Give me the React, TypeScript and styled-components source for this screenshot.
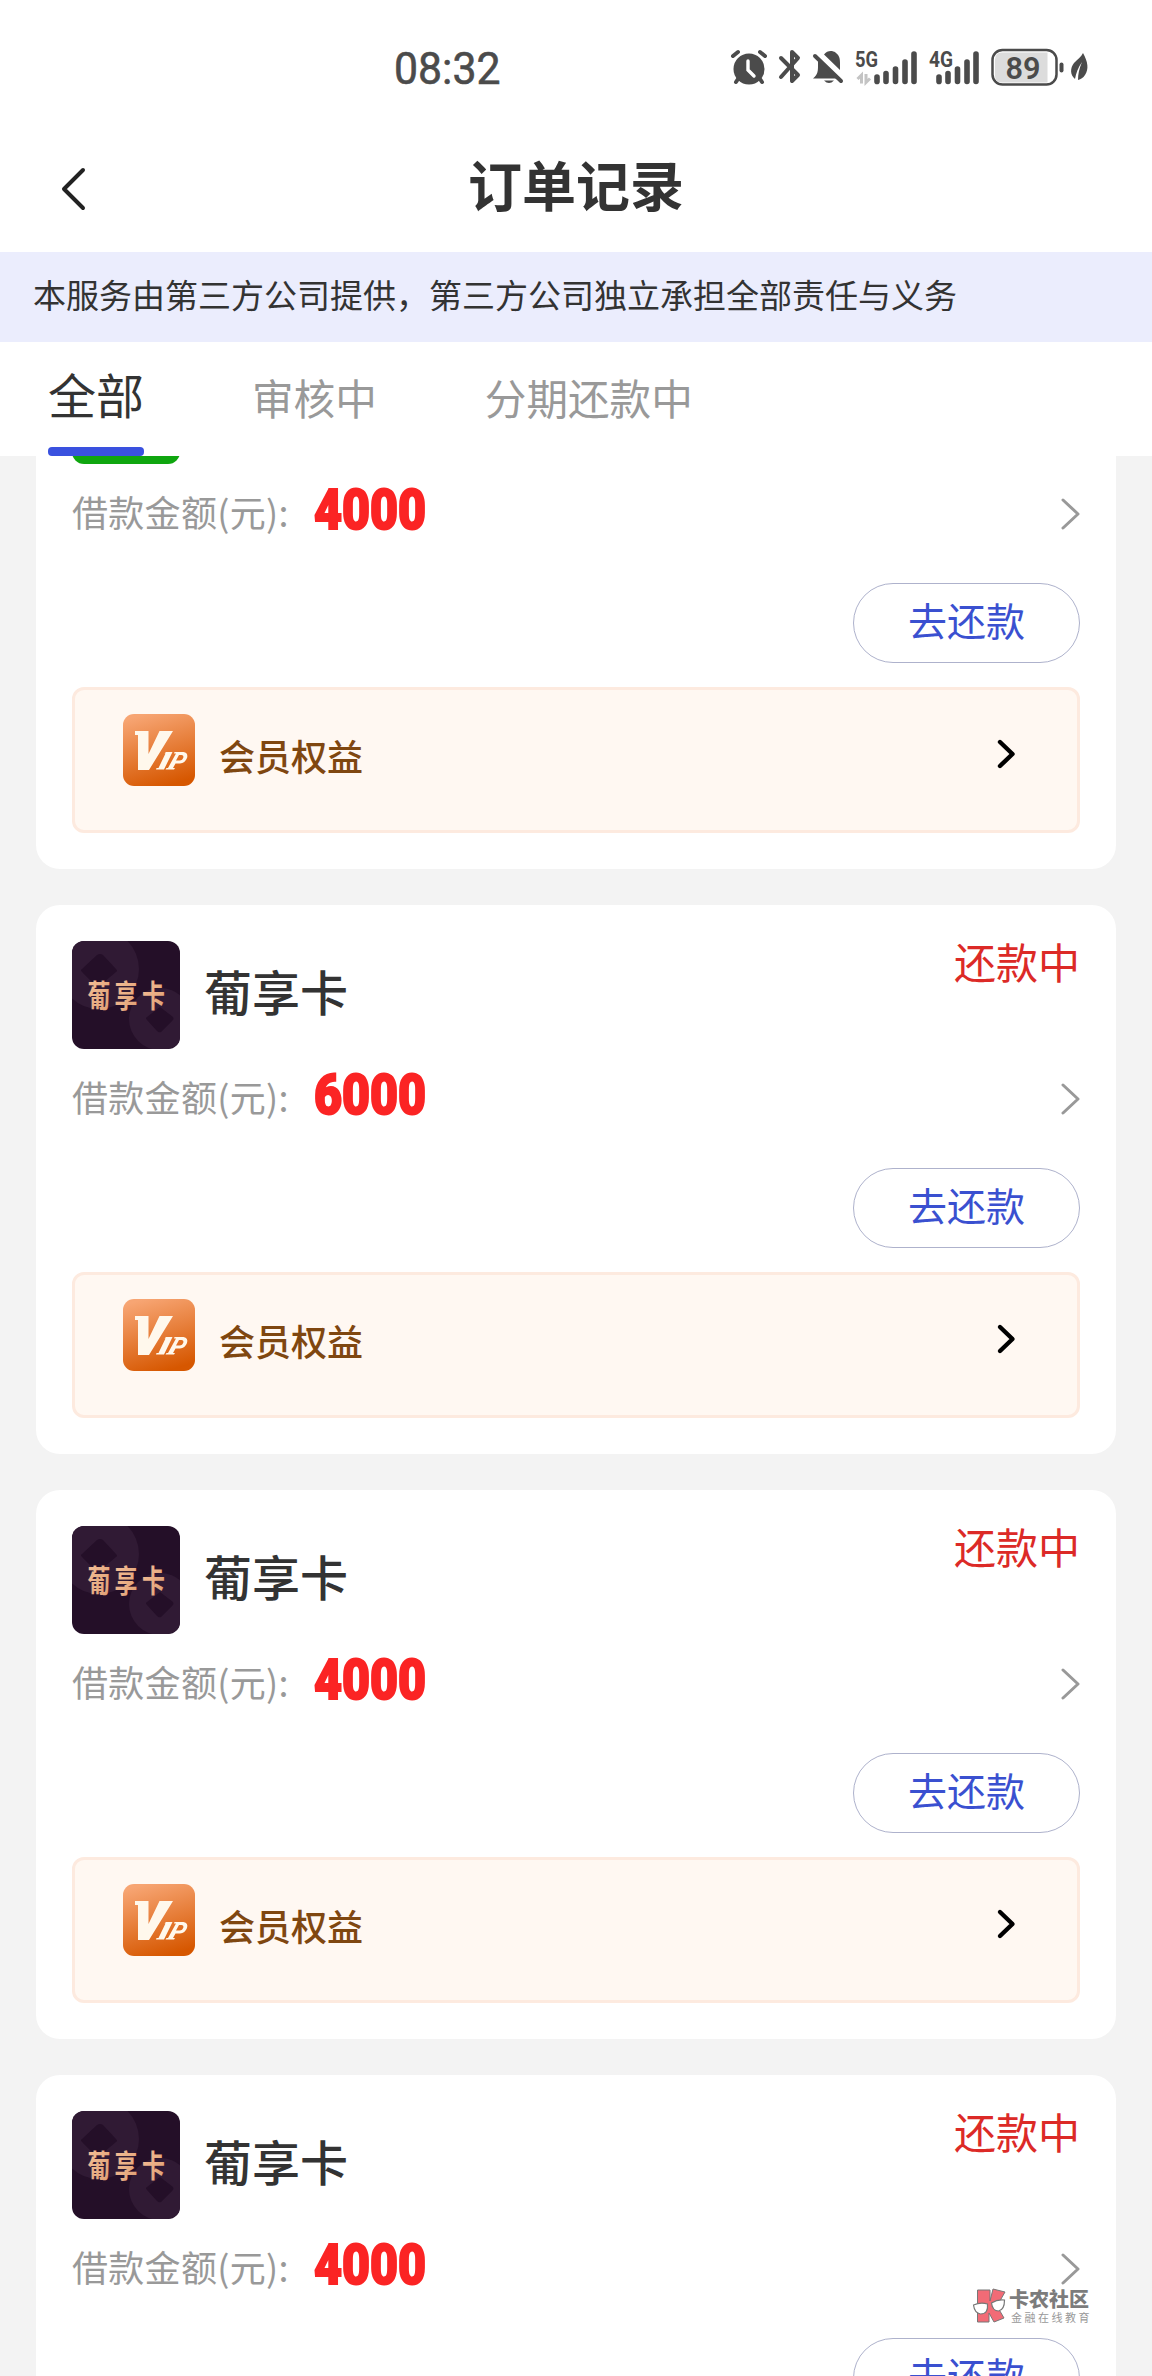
import React from "react";
import styled, { createGlobalStyle } from "styled-components";

const Global = createGlobalStyle`
  * { box-sizing: border-box; }
  html, body { margin: 0; padding: 0; background: #f3f3f3; }
  body { font-family: "Noto Sans CJK SC", sans-serif; color: #333; }
`;

const Screen = styled.main`
  width: 1152px;
  height: 2376px;
  overflow: hidden;
  display: flex;
  flex-direction: column;
  background: #f3f3f3;
  position: relative;
`;

const StatusBar = styled.div`
  height: 134px;
  flex: none;
  background: #fff;
  display: flex;
  justify-content: space-between;
  padding-left: 394px;
  padding-right: 62px;
`;

const Clock = styled.div`
  font-family: Roboto, sans-serif;
  font-size: 45px;
  line-height: 52px;
  font-weight: 400;
  color: #4b4b4b;
  -webkit-text-stroke: 0.6px #4b4b4b;
  padding-top: 43px;
  transform: scaleX(0.95);
  transform-origin: left;
`;

const StatusIcons = styled.svg`
  display: block;
  width: 420px;
  height: 80px;
  margin: 30px -30px 0 0;
`;

const Header = styled.header`
  height: 118px;
  flex: none;
  background: #fff;
  display: grid;
  grid-template-columns: 150px 1fr 150px;
  align-items: start;
`;

const BackButton = styled.button`
  border: 0;
  background: none;
  padding: 29px 0 0 60px;
  height: 80px;
  text-align: left;
  line-height: 0;
`;

const Title = styled.h1`
  margin: 0;
  padding-top: 10px;
  font-size: 54px;
  line-height: 80px;
  font-weight: 700;
  text-align: center;
`;

const Notice = styled.p`
  margin: 0;
  flex: none;
  height: 90px;
  padding-left: 33px;
  background: #ebedfd;
  font-size: 33px;
  line-height: 85px;
  white-space: nowrap;
`;

const Tabs = styled.nav`
  height: 114px;
  flex: none;
  background: #fff;
  padding-left: 48px;
  display: flex;
  gap: 108px;
`;

const Tab = styled.div<{ $active?: boolean }>`
  height: 114px;
  display: flex;
  flex-direction: column;
  justify-content: space-between;
  font-size: ${(p) => (p.$active ? 48 : 41.6)}px;
  line-height: ${(p) => (p.$active ? 103 : 111)}px;
  color: ${(p) => (p.$active ? "#333" : "#999")};
  white-space: nowrap;

  &::after {
    content: "";
    flex: none;
    height: 9px;
    border-radius: 4px;
    background: ${(p) => (p.$active ? "#3a51df" : "transparent")};
  }
`;

const TabLabel = styled.span`
  height: 105px;
`;

const List = styled.section`
  flex: 1;
  min-height: 0;
  overflow: hidden;
  padding: 0 36px;
`;

const Scrolled = styled.div`
  margin-top: -136px;
  display: flex;
  flex-direction: column;
  gap: 36px;
`;

const Card = styled.article`
  height: 549px;
  flex: none;
  background: #fff;
  border-radius: 24px;
  padding: 36px;
  display: flex;
  flex-direction: column;
`;

const CardHead = styled.div`
  height: 108px;
  flex: none;
  display: flex;
  align-items: center;
`;

const GreenLogo = styled.div`
  width: 108px;
  height: 108px;
  border-radius: 12px;
  background: #0fa60f;
`;

const CardName = styled.h2`
  margin: 0 0 0 24px;
  font-size: 48px;
  line-height: 70px;
  font-weight: 500;
  flex: 1;
  padding-bottom: 11px;
`;

const State = styled.span`
  align-self: flex-start;
  font-size: 42px;
  line-height: 40px;
  color: #dc2a27;
`;

const AmountRow = styled.div`
  height: 100px;
  flex: none;
  display: flex;
  align-items: center;
  color: #999;
  font-size: 36px;
`;

const AmountLabel = styled.span`
  width: 241px;
  white-space: nowrap;
  letter-spacing: 0.3px;
  padding-bottom: 7px;
`;

const Amount = styled.span`
  font-family: Roboto, sans-serif;
  font-weight: 900;
  font-size: 55px;
  line-height: 70px;
  color: #fb2424;
  -webkit-text-stroke: 2px #fb2424;
  transform: scaleX(0.88);
  transform-origin: left;
  flex: 1;
  padding: 0 0 8px 1px;
`;

const RepayButton = styled.button`
  width: 227px;
  height: 80px;
  flex: none;
  margin: 19px 0 24px;
  align-self: flex-end;
  border: 1px solid #aeb2cc;
  border-radius: 40px;
  background: #fff;
  padding: 0 0 8px;
  font: 400 39px/70px "Noto Sans CJK SC", sans-serif;
  color: #3a50d0;
`;

const Benefit = styled.div`
  height: 146px;
  flex: none;
  border: 3px solid #fdeadf;
  border-radius: 12px;
  background: #fff8f2;
  display: flex;
  align-items: flex-start;
  padding: 24px 61px 0 48px;
`;

const BenefitText = styled.span`
  flex: 1;
  padding-left: 24px;
  font-size: 36px;
  line-height: 83px;
  font-weight: 500;
  color: #7f4710;
`;

const BenefitArrow = styled.svg`
  margin-top: 23px;
  display: block;
`;

const Watermark = styled.div`
  position: absolute;
  left: 972px;
  top: 2287px;
  display: flex;
  gap: 3px;
`;

const MarkTexts = styled.div`
  display: flex;
  flex-direction: column;
  white-space: nowrap;
`;

const MarkName = styled.b`
  font-size: 20px;
  line-height: 24px;
  font-weight: 900;
  color: #7c7c7c;
`;

const MarkSub = styled.span`
  font-size: 11px;
  line-height: 12px;
  letter-spacing: 2.5px;
  padding-left: 2px;
  color: #999;
`;

function PhoneIcons() {
  const ink = "#4b4b4b";
  return (
    <StatusIcons viewBox="0 0 420 80" fill={ink}>
      <g stroke={ink} strokeLinecap="round">
        <circle cx="49" cy="39" r="15.500" stroke="none" />
        <path d="M33 26l5-4M65 26l-5-4M38 49l-2 3M60 49l2 3" strokeWidth="4" fill="none" />
        <path d="M48 31v9l6 6" stroke="#fff" strokeWidth="3.400" fill="none" />
      </g>
      <path d="M81 28l17 17-6 6V22l6 6L81 47" fill="none" stroke={ink} strokeWidth="4" strokeLinecap="round" strokeLinejoin="round" />
      <path d="M124 24.500c3-4 8-4.500 11.500-2 4 3 4.500 6 4.500 10.500v7zM124 50.500h10q-5 5-10 0z" />
      <path d="M113 48.500c5-4 5-8 5-13v-5.500l20 18.500z" />
      <path d="M115 26l26 25" stroke={ink} strokeWidth="4" strokeLinecap="round" />
      <g fontFamily="Roboto, sans-serif" fontWeight="700" fontSize="22">
        <text x="155" y="37" textLength="23" lengthAdjust="spacingAndGlyphs">5G</text>
        <text x="229" y="37" textLength="24" lengthAdjust="spacingAndGlyphs">4G</text>
      </g>
      <path d="M161.500 53.500V45l-4 4M166 44v8.500l4-4" fill="none" stroke="#c4c4c4" strokeWidth="3" />
      <g stroke={ink} strokeWidth="5.600" strokeLinecap="round">
        <path d="M177 47v4.400M186 43.500v8M195.500 39v12.500M205 32v19.500M214 24v27.500" />
        <path d="M239 47v4.400M248 43.500v8M257.500 39v12.500M267 32v19.500M276 24v27.500" />
      </g>
      <rect x="292.500" y="20" width="64" height="34.500" rx="10" fill="#fff" stroke={ink} strokeWidth="2.500" />
      <path d="M302 22.500h45.500v30H302q-7 0-7-7v-16q0-7 7-7z" fill="#dcdcdc" />
      <text x="305.500" y="48.500" fontFamily="Roboto, sans-serif" fontWeight="600" fontSize="31.500" textLength="35" lengthAdjust="spacingAndGlyphs">89</text>
      <path d="M361.500 34.500v6" stroke={ink} strokeWidth="4" strokeLinecap="round" />
      <path d="M383 23c5 9 6 16 2 22-2 3-4 4-7 5 0-6 1-11 4-18-4 6-6 11-7 17-5-4-5-11-1-16 4-4 7-6 9-10z" />
    </StatusIcons>
  );
}

function CardLogo() {
  return (
    <svg width="108" height="108" viewBox="0 0 108 108">
      <defs>
        <clipPath id="logoClip"><rect width="108" height="108" rx="12" /></clipPath>
        <linearGradient id="gold" x1="0" y1="0" x2="1" y2="1">
          <stop stopColor="#f8c39a" /><stop offset="1" stopColor="#dc9c72" />
        </linearGradient>
      </defs>
      <g clipPath="url(#logoClip)">
        <rect width="108" height="108" fill="#240f28" />
        <circle cx="27" cy="28" r="40" fill="#301a34" />
        <circle cx="88" cy="78" r="31" fill="#301a34" />
        <path d="M25 14q3-2 6 0l13 14q2 2 0 3L31 42H21L10 31q-2-2 0-3zM88 66l13 10q1 2 0 3L89 91q-2 1-4-1L75 79q-2-2 0-3z" fill="#240f28" />
        <g fontFamily="Noto Sans CJK SC, sans-serif" fontWeight="700" fontSize="31" fill="url(#gold)">
          <text transform="translate(15.500 66) scale(.74 1)">葡</text>
          <text transform="translate(42.500 66) scale(.74 1)">享</text>
          <text transform="translate(70 66) scale(.74 1)">卡</text>
        </g>
      </g>
    </svg>
  );
}

function VipIcon() {
  return (
    <svg width="72" height="72" viewBox="0 0 72 72">
      <defs>
        <linearGradient id="vip" x1="0.300" y1="0" x2="0.600" y2="1">
          <stop stopColor="#f7a573" /><stop offset="1" stopColor="#d65700" />
        </linearGradient>
      </defs>
      <rect width="72" height="72" rx="11" fill="url(#vip)" />
      <g fill="#fff8ec">
        <path d="M12 17h13.500v23l11-23H50L26 56H15V21h-3z" />
        <path d="M43 38h6.500l-8.500 17.500h-8l.500-1.500h2l7-14.500h-1z" />
        <path fillRule="evenodd" d="M51.500 38h9q5 1 3.500 6-2 5-7 5.500h-4.500l-2.500 4.500h2l-1 1.500h-8.500l1-1.500h1.500l8-14.500h-2zM56 41l-3 5.500h3.500q3 0 4-3.500 0-2-2-2z" />
      </g>
    </svg>
  );
}

function MarkLogo() {
  return (
    <svg width="34" height="38" viewBox="0 0 34 38">
      <path d="M5.500 3H18v11l3-12 12 3-8 14 7 12-10 4-5-9v9H5.500z" fill="#f26b76" stroke="#777" strokeWidth="1" />
      <path d="M1.500 18q7-3 14-1 1 10-7 10-6-1-7-9zM19.500 16q6-4 13-3 0 10-6 11-6 0-7-8z" fill="#fff" stroke="#777" strokeWidth="1.200" />
    </svg>
  );
}

interface Order {
  amount: string;
  green?: boolean;
}

const orders: Order[] = [
  { amount: "4000", green: true },
  { amount: "6000" },
  { amount: "4000" },
  { amount: "4000" },
];

function OrderCard({ amount, green }: Order) {
  return (
    <Card>
      <CardHead>
        {green ? (
          <GreenLogo />
        ) : (
          <>
            <CardLogo />
            <CardName>葡享卡</CardName>
            <State>还款中</State>
          </>
        )}
      </CardHead>
      <AmountRow>
        <AmountLabel>借款金额(元):</AmountLabel>
        <Amount>{amount}</Amount>
        <svg width="20" height="34" viewBox="0 0 20 34">
          <path d="M3 3l15 14L3 31" fill="none" stroke="#999" strokeWidth="3" strokeLinecap="round" strokeLinejoin="round" />
        </svg>
      </AmountRow>
      <RepayButton>去还款</RepayButton>
      <Benefit>
        <VipIcon />
        <BenefitText>会员权益</BenefitText>
        <BenefitArrow width="20" height="34" viewBox="0 0 20 34">
          <path d="M4 5l12.500 12L4 29" fill="none" stroke="#000" strokeWidth="4.400" strokeLinecap="round" strokeLinejoin="round" />
        </BenefitArrow>
      </Benefit>
    </Card>
  );
}

export default function App() {
  return (
    <Screen>
      <Global />
      <StatusBar>
        <Clock>08:32</Clock>
        <PhoneIcons />
      </StatusBar>
      <Header>
        <BackButton aria-label="返回">
          <svg width="26" height="46" viewBox="0 0 26 46">
            <path d="M23 4L4 23l19 19" fill="none" stroke="#222" strokeWidth="4" strokeLinecap="round" strokeLinejoin="round" />
          </svg>
        </BackButton>
        <Title>订单记录</Title>
      </Header>
      <Notice>本服务由第三方公司提供，第三方公司独立承担全部责任与义务</Notice>
      <Tabs>
        <Tab $active><TabLabel>全部</TabLabel></Tab>
        <Tab><TabLabel>审核中</TabLabel></Tab>
        <Tab><TabLabel>分期还款中</TabLabel></Tab>
      </Tabs>
      <List>
        <Scrolled>
          {orders.map((order, i) => (
            <OrderCard key={i} {...order} />
          ))}
        </Scrolled>
      </List>
      <Watermark>
        <MarkLogo />
        <MarkTexts>
          <MarkName>卡农社区</MarkName>
          <MarkSub>金融在线教育</MarkSub>
        </MarkTexts>
      </Watermark>
    </Screen>
  );
}
